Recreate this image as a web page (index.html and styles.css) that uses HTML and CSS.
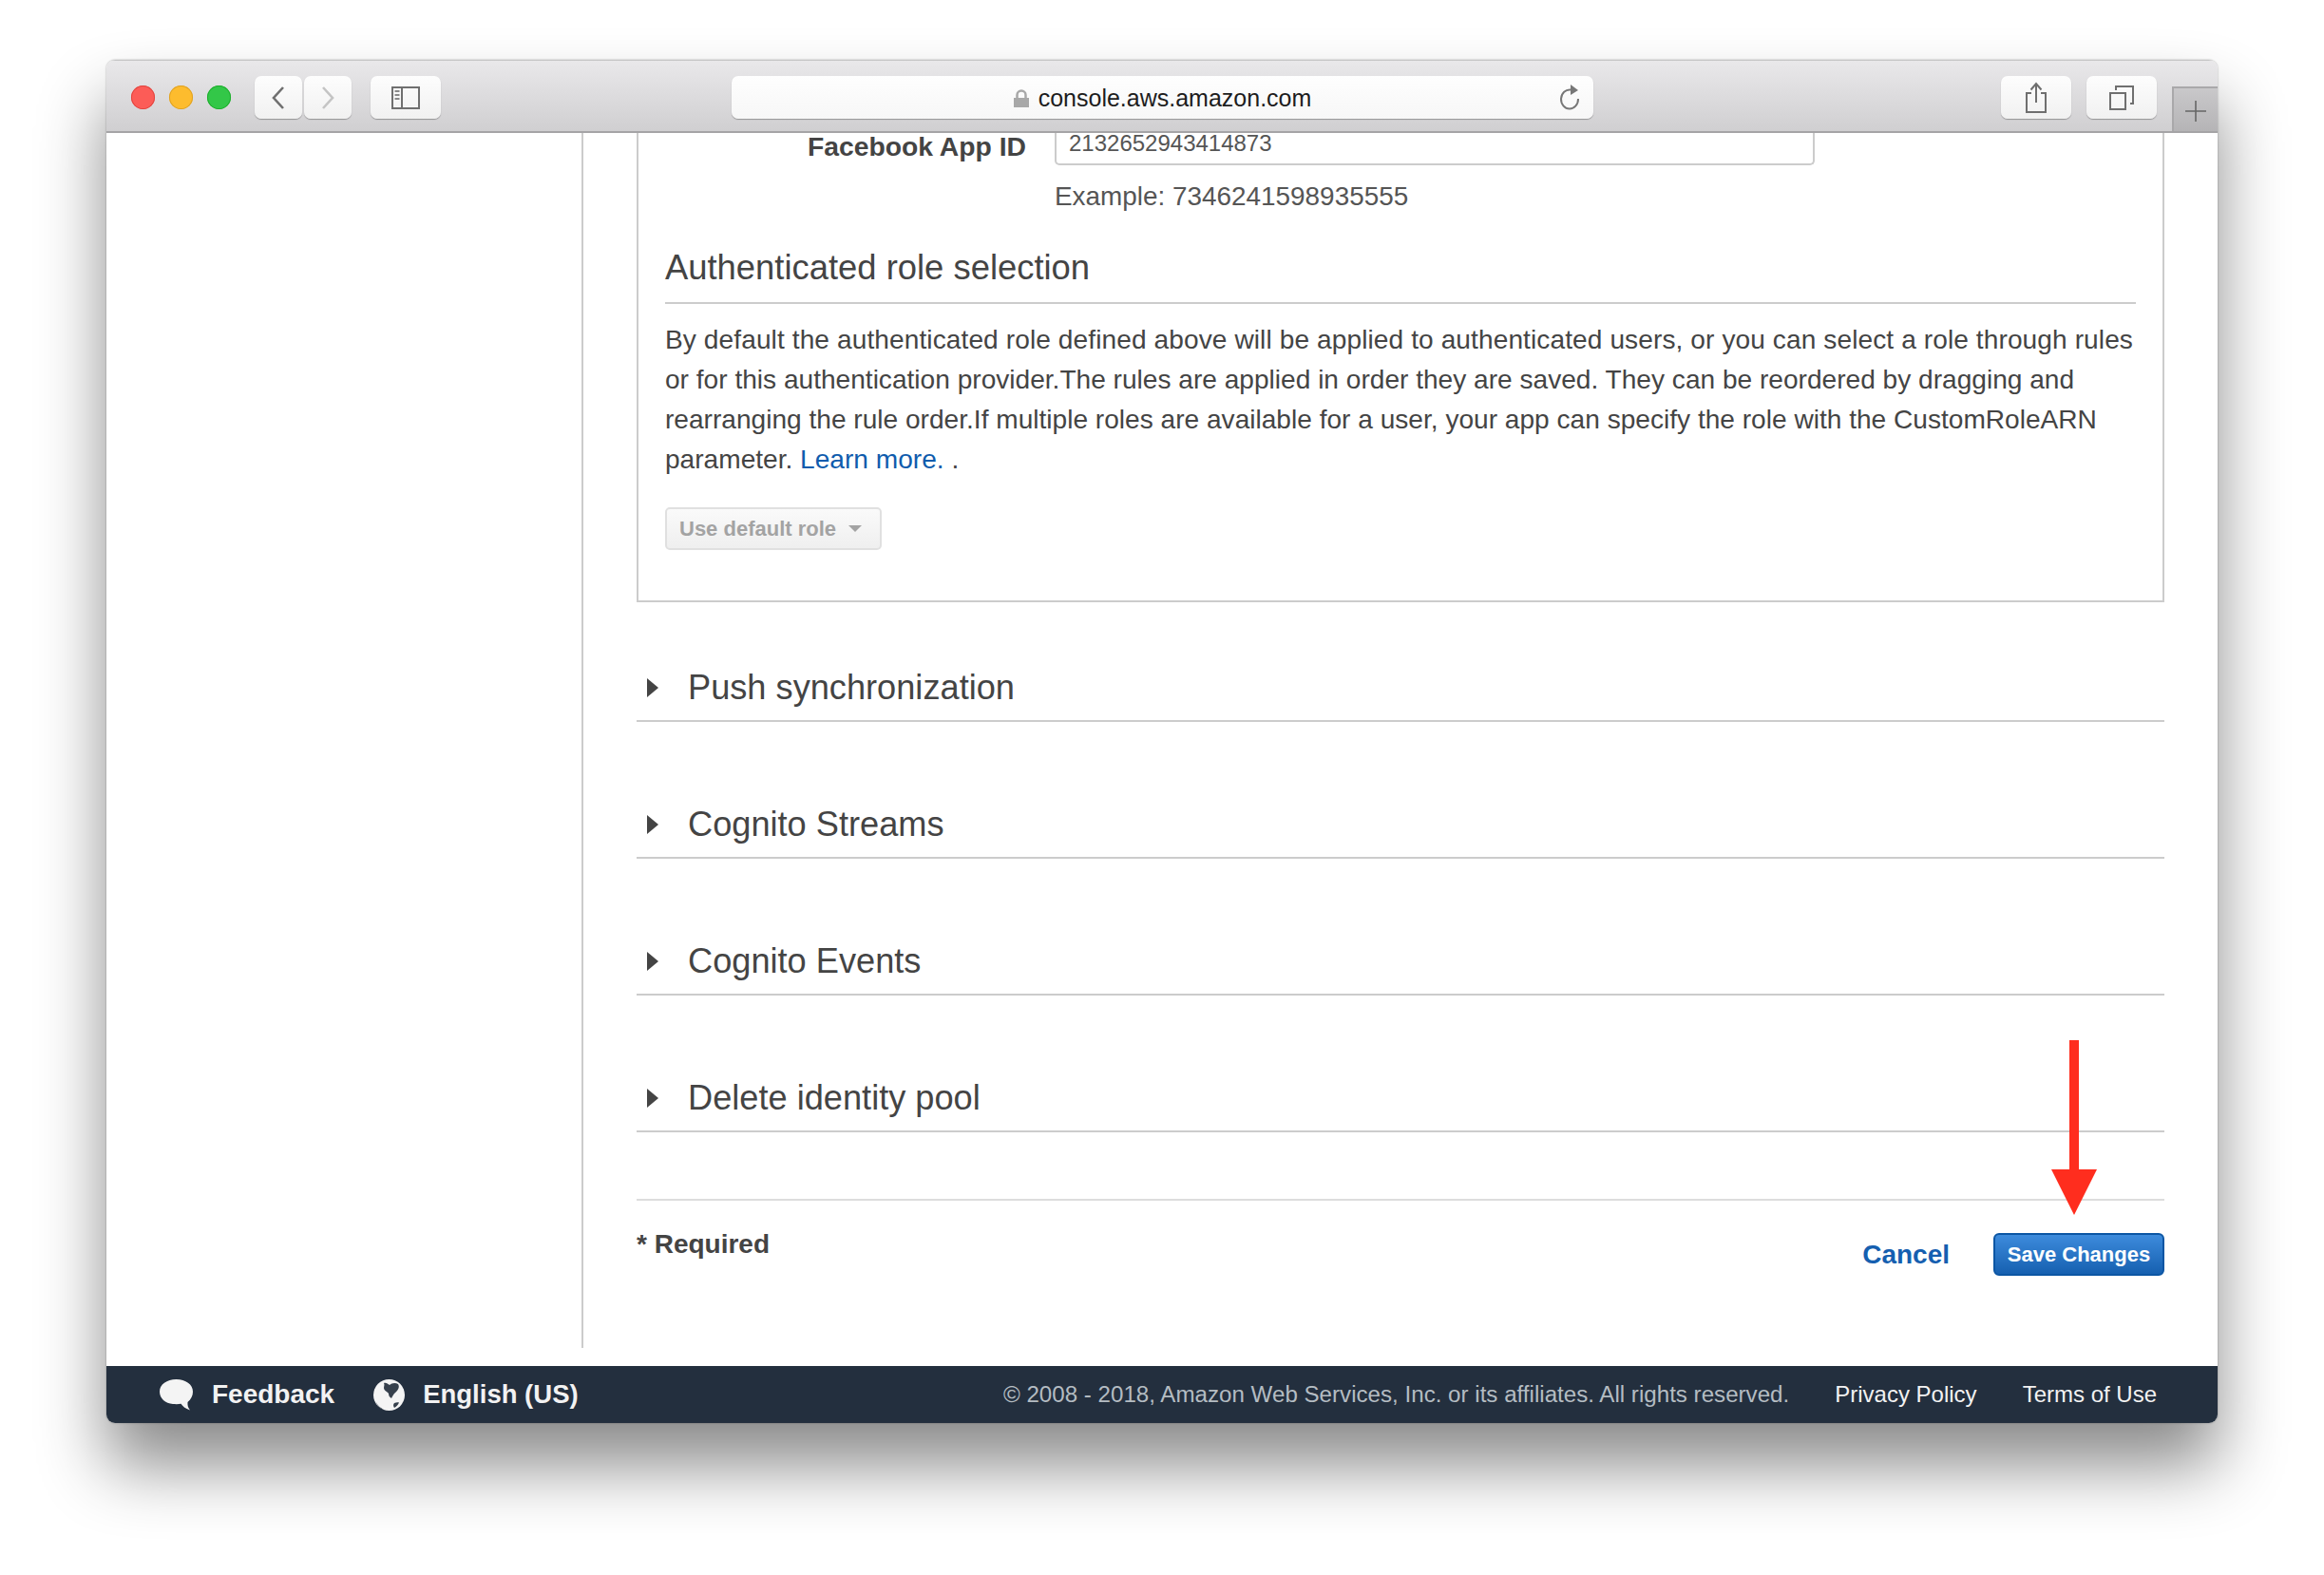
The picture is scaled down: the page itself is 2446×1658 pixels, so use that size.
FILE: index.html
```html
<!DOCTYPE html>
<html lang="en">
<head>
<meta charset="utf-8">
<title>console.aws.amazon.com</title>
<link rel="stylesheet" href="styles.css">
</head>
<body>
<div class="window">
  <header class="toolbar">
    <div class="lights"><span class="light red"></span><span class="light yellow"></span><span class="light green"></span></div>
    <div class="nav-group">
      <button class="tb nav"><svg width="20" height="26" viewBox="0 0 20 26"><path d="M15 2 5 13l10 11" fill="none" stroke="#6f6f6f" stroke-width="2.6"/></svg></button>
      <button class="tb nav"><svg width="20" height="26" viewBox="0 0 20 26"><path d="M5 2l10 11L5 24" fill="none" stroke="#c4c4c4" stroke-width="2.6"/></svg></button>
    </div>
    <button class="tb side"><svg width="30" height="24" viewBox="0 0 30 24"><path d="M1 1h28v22H1zM11 1v22" fill="none" stroke="#6f6f6f" stroke-width="2"/><path d="M3.500 4h5v2h-5zM3.500 8h5v2h-5zM3.500 12h5v2h-5z" fill="#8a8a8a"/></svg></button>
    <div class="url">
      <span class="url-text"><svg class="lock" width="16" height="20" viewBox="0 0 16 20"><path d="M3.500 9V6a4.500 4.500 0 0 1 9 0v3" fill="none" stroke="#a8a8a8" stroke-width="2.500"/><rect x="0" y="9" width="16" height="10" fill="#a8a8a8"/></svg>console.aws.amazon.com</span>
      <svg class="reload" width="24" height="28" viewBox="0 0 24 28"><path d="M13 6.500A9 10 0 1 0 21 16" fill="none" stroke="#777" stroke-width="2"/><path d="M13 1l8 6-8 5z" fill="#777"/></svg>
    </div>
    <button class="tb act share"><svg width="24" height="34" viewBox="0 0 24 34"><path d="M7 12H2v20h20V12h-5" fill="none" stroke="#6f6f6f" stroke-width="2"/><path d="M12 22V3M6.500 8.500 12 2l5.500 6.500" fill="none" stroke="#6f6f6f" stroke-width="2"/></svg></button>
    <button class="tb act tabs"><svg width="26" height="26" viewBox="0 0 26 26"><path d="M7 5V1h18v18h-3" fill="none" stroke="#6f6f6f" stroke-width="2"/><path d="M1 8h16v17H1z" fill="none" stroke="#6f6f6f" stroke-width="2"/></svg></button>
    <div class="newtab"><svg width="22" height="22" viewBox="0 0 22 22"><path d="M11 0v22M0 11h22" stroke="#666" stroke-width="1.600"/></svg></div>
  </header>

  <div class="page">
    <aside class="sidebar"></aside>
    <main class="main">
      <section class="panel">
        <div class="field-row">
          <label class="field-label">Facebook App ID</label>
          <div class="field-input">2132652943414873</div>
        </div>
        <p class="example">Example: 7346241598935555</p>
        <h3 class="panel-title">Authenticated role selection</h3>
        <p class="desc">By default the authenticated role defined above will be applied to authenticated users, or you can select a role through rules<br>or for this authentication provider.The rules are applied in order they are saved. They can be reordered by dragging and<br>rearranging the rule order.If multiple roles are available for a user, your app can specify the role with the CustomRoleARN<br>parameter. <a class="link">Learn more.</a> .</p>
        <button class="role-btn">Use default role<span class="caret"></span></button>
      </section>

      <div class="section"><span class="tri"></span><span class="section-title">Push synchronization</span></div>
      <div class="section"><span class="tri"></span><span class="section-title">Cognito Streams</span></div>
      <div class="section"><span class="tri"></span><span class="section-title">Cognito Events</span></div>
      <div class="section"><span class="tri"></span><span class="section-title">Delete identity pool</span></div>

      <div class="actions">
        <span class="required">* Required</span>
        <div class="action-btns">
          <a class="cancel">Cancel</a>
          <button class="save">Save Changes</button>
        </div>
      </div>
    </main>
  </div>

  <footer class="footer">
    <span class="foot-item"><svg class="foot-icon" width="35" height="33" viewBox="0 0 35 33"><path d="M17.500 0C7.500 0 0 5.500 0 13c0 7 6 12.500 14 13 3 .2 6 .2 8.500-.2 1.500 2.500 4.500 5 9.500 6.700-2-2.500-2.800-5-2.500-8.500C33 21 35 17.500 35 13 35 5.500 27.500 0 17.500 0z" fill="#f4f4f4"/></svg>Feedback</span>
    <span class="foot-item lang"><svg class="foot-icon lang-icon" width="33" height="33" viewBox="0 0 33 33"><circle cx="16.500" cy="16.500" r="16.500" fill="#f4f4f4"/><path d="M11 4c2-1 4 .5 6 2 2-2 6-3 9-1 2 3 0 7-4 10-1 1-2 3-3 5-2-1-3-3-3-5-1-2-5-3-5-6 0-2 1-3 0-5zM22 25c2-1 4-1 5-.5-1 2.500-3 4.500-5 5.500-1-1.500-1.500-3.500 0-5zM3 24c1 3 4 6 8 8-4-1-7-4-8-8z" fill="#36404c"/></svg>English (US)</span>
    <span class="copy">© 2008 - 2018, Amazon Web Services, Inc. or its affiliates. All rights reserved.</span>
    <a class="foot-link">Privacy Policy</a>
    <a class="foot-link">Terms of Use</a>
  </footer>
</div>
<svg class="arrow" width="48" height="184" viewBox="0 0 48 184"><path d="M19 0h10v136h19l-24 48L0 136h19z" fill="#ff2d1e"/></svg>
</body>
</html>
```

FILE: styles.css
```css
* { box-sizing: border-box; }
html, body { margin: 0; height: 100%; }
body {
  background: #fff;
  padding: 63px 112px 0;
  font-family: "Liberation Sans", Arial, sans-serif;
  color: #444;
  overflow: hidden;
  position: relative;
}
.window {
  width: 2222px;
  height: 1435px;
  border-radius: 9px;
  background: #fff;
  box-shadow: 0 45px 70px rgba(0,0,0,.46), 0 0 2px rgba(0,0,0,.35);
  display: flex;
  flex-direction: column;
  overflow: hidden;
}
.toolbar {
  height: 77px;
  flex: none;
  display: flex;
  align-items: flex-start;
  padding: 16px 0 0 26px;
  background: linear-gradient(#e9e8ea, #d0cfd1);
  border-bottom: 2px solid #a5a4a6;
  border-top: 1px solid #c6c6c6;
  position: relative;
}
.lights { display: flex; gap: 15px; padding-top: 10px; }
.light { width: 25px; height: 25px; border-radius: 50%; }
.red { background: #fc5c57; box-shadow: inset 0 0 0 1px #e0443e; }
.yellow { background: #fdbc2e; box-shadow: inset 0 0 0 1px #dea123; }
.green { background: #33c748; box-shadow: inset 0 0 0 1px #1dad2b; }
.tb {
  height: 45px;
  border: 0;
  padding: 0;
  border-radius: 7px;
  background: linear-gradient(#fdfdfd, #f1f1f1);
  box-shadow: 0 1px 1px rgba(0,0,0,.3);
  display: flex;
  align-items: center;
  justify-content: center;
}
.nav-group { display: flex; gap: 2px; margin-left: 25px; }
.nav { width: 50px; }
.side { width: 74px; margin-left: 20px; }
.url {
  width: 907px;
  height: 45px;
  margin-left: 306px;
  border-radius: 7px;
  background: linear-gradient(#fefefe, #f7f7f7);
  box-shadow: 0 1px 1px rgba(0,0,0,.3);
  display: flex;
  align-items: center;
  justify-content: center;
  position: relative;
}
.url-text {
  font-size: 25px;
  color: #1d1d1d;
  display: flex;
  align-items: center;
  gap: 10px;
  padding-top: 2px;
}
.reload { position: absolute; right: 13px; top: 8px; }
.act { width: 74px; }
.share { margin-left: 429px; }
.tabs { margin-left: 16px; }
.newtab {
  position: absolute;
  right: 0;
  bottom: 0;
  width: 48px;
  height: 47px;
  padding-top: 2px;
  background: linear-gradient(#c9c8ca, #b5b4b6);
  border: 2px solid #a9a8aa;
  border-width: 2px 0 0 2px;
  display: flex;
  align-items: center;
  justify-content: center;
}

.page { flex: 1; display: flex; min-height: 0; }
.sidebar { width: 502px; height: 1279px; border-right: 2px solid #ccc; flex: none; }
.main { width: 1608px; margin-left: 56px; flex: none; }

.panel {
  height: 494px;
  border: 2px solid #ccc;
  border-top: 0;
  padding: 0 28px;
}
.field-row { display: flex; height: 34px; }
.field-label {
  width: 380px;
  text-align: right;
  font-size: 28.300px;
  font-weight: bold;
  line-height: 28px;
  white-space: nowrap;
}
.field-input {
  width: 800px;
  height: 34px;
  margin-left: 30px;
  border: 2px solid #ccc;
  border-top: 0;
  border-radius: 0 0 5px 5px;
  font-size: 24px;
  line-height: 21px;
  padding-left: 13px;
  color: #555;
}
.example { margin: 17px 0 0 410px; font-size: 27.900px; line-height: 32px; color: #555; }
.panel-title {
  margin: 37px 0 0;
  height: 60px;
  font-size: 36.400px;
  line-height: 44px;
  font-weight: normal;
  border-bottom: 2px solid #ccc;
}
.desc { margin: 17px 0 0; font-size: 28.100px; line-height: 42px; white-space: nowrap; }
.desc::first-line { letter-spacing: .09px; }
.link { color: #0f5cad; }
.role-btn {
  display: flex;
  align-items: center;
  width: 228px;
  height: 45px;
  margin-top: 29px;
  padding: 0 0 0 13px;
  border: 2px solid #e0e0e0;
  border-radius: 5px;
  background: linear-gradient(#fafafa, #efefef);
  font: bold 22px "Liberation Sans", Arial, sans-serif;
  color: #a3a3a3;
}
.caret {
  margin-left: 13px;
  border: 7px solid transparent;
  border-top: 7px solid #a3a3a3;
  border-bottom: 0;
}

.section {
  height: 80px;
  margin-top: 64px;
  border-bottom: 2px solid #ccc;
  display: flex;
  align-items: center;
  padding: 10px 0 0 11px;
}
.section:first-of-type { margin-top: 46px; }
.tri {
  border-left: 12px solid #444;
  border-top: 10px solid transparent;
  border-bottom: 10px solid transparent;
}
.section-title { margin-left: 31px; font-size: 36.200px; color: #444; }

.actions {
  margin-top: 70px;
  border-top: 2px solid #ddd;
  display: flex;
  justify-content: space-between;
  align-items: flex-start;
}
.required { font-size: 28px; font-weight: bold; margin-top: 30px; line-height: 32px; }
.action-btns { display: flex; align-items: center; gap: 46px; margin-top: 34px; }
.cancel { color: #155fb0; font-size: 28px; font-weight: bold; }
.save {
  width: 180px;
  height: 45px;
  padding: 0;
  border: 2px solid #0c56a4;
  border-radius: 6px;
  background: linear-gradient(#3d8bdc, #1660b0);
  color: #fff;
  font: bold 22px "Liberation Sans", Arial, sans-serif;
}

.footer {
  height: 60px;
  flex: none;
  background: #232f3e;
  color: #f2f2f2;
  display: flex;
  align-items: center;
  padding: 0 64px 0 56px;
  font-size: 24px;
}
.foot-item { display: flex; align-items: center; font-size: 28px; font-weight: bold; }
.foot-icon { margin-right: 20px; }
.lang { margin-left: 41px; font-size: 27.500px; }
.lang-icon { margin-right: 19px; }
.copy { margin-left: auto; color: #b4bcc2; font-size: 24.150px; }
.foot-link { margin-left: 48px; color: #f2f2f2; }

.arrow { position: absolute; left: 2159px; top: 1095px; }
```
